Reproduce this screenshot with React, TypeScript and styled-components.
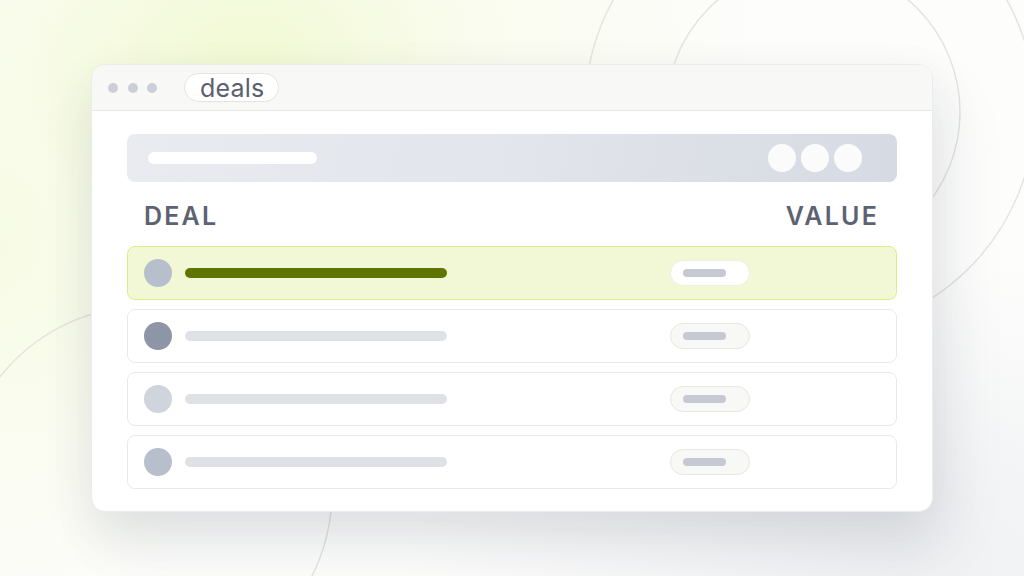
import styled, { createGlobalStyle } from "styled-components";

const GlobalStyle = createGlobalStyle`
  html, body {
    margin: 0;
    padding: 0;
  }
  body {
    font-family: Inter, "Liberation Sans", sans-serif;
  }
`;

const Page = styled.div`
  position: relative;
  width: 1024px;
  height: 576px;
  overflow: hidden;
  box-sizing: border-box;
  padding: 64px 91px;
  background:
    radial-gradient(ellipse 520px 420px at 250px 60px, rgba(240, 249, 205, 0.85) 0%, rgba(246, 251, 226, 0.5) 45%, rgba(255, 255, 255, 0) 100%),
    radial-gradient(ellipse 260px 420px at 0px 250px, rgba(246, 251, 226, 0.8) 0%, rgba(255, 255, 255, 0) 100%),
    radial-gradient(ellipse 500px 300px at 900px 560px, rgba(232, 234, 238, 0.7) 0%, rgba(255, 255, 255, 0) 100%),
    #fdfdfc;
`;

const Rings = styled.svg`
  position: absolute;
  inset: 0;
  width: 1024px;
  height: 576px;
  z-index: 0;
`;

const Window = styled.div`
  position: relative;
  z-index: 1;
  width: 842px;
  height: 448px;
  box-sizing: border-box;
  background: #ffffff;
  border: 1px solid #ececea;
  border-radius: 14px;
  overflow: hidden;
  box-shadow: 0 22px 50px rgba(40, 48, 64, 0.1), 16px 30px 70px rgba(40, 48, 64, 0.06);
  display: flex;
  flex-direction: column;
`;

const TitleBar = styled.div`
  height: 46px;
  box-sizing: border-box;
  background: #f8f8f6;
  border-bottom: 1px solid #e6e6e2;
  display: flex;
  align-items: center;
  padding-left: 16px;
`;

const Dots = styled.div`
  display: flex;
  gap: 9.5px;
  margin-right: 27px;
`;

const Dot = styled.span`
  width: 10px;
  height: 10px;
  border-radius: 50%;
  background: #cdcfd8;
`;

const Tab = styled.div`
  height: 29px;
  box-sizing: border-box;
  padding: 0 14px 0 15px;
  border: 1px solid #e3e3de;
  border-radius: 15px;
  background: #ffffff;
  display: flex;
  align-items: center;
  font-size: 25px;
  color: #5a6070;
  letter-spacing: 0.2px;
`;

const Body = styled.div`
  flex: 1;
  padding: 23px 35px 0 35px;
  display: flex;
  flex-direction: column;
`;

const SearchBar = styled.div`
  height: 48px;
  border-radius: 8px;
  background: linear-gradient(100deg, #e9ebf1 0%, #e2e5eb 50%, #d6dae2 100%);
  display: flex;
  align-items: center;
  justify-content: space-between;
  padding: 0 35px 0 21px;
`;

const SearchField = styled.div`
  width: 169px;
  height: 12px;
  border-radius: 6px;
  background: #ffffff;
`;

const Buttons = styled.div`
  display: flex;
  gap: 5px;
`;

const RoundButton = styled.span`
  width: 28px;
  height: 28px;
  border-radius: 50%;
  background: #fbfbfb;
`;

const Headings = styled.div`
  height: 64px;
  box-sizing: border-box;
  padding: 4px 18px 0 17px;
  display: flex;
  align-items: center;
  justify-content: space-between;
  font-size: 25px;
  font-weight: 600;
  letter-spacing: 2.2px;
  color: #5c6272;
`;

const Rows = styled.div`
  display: flex;
  flex-direction: column;
  gap: 9px;
`;

const Row = styled.div<{ $active?: boolean }>`
  height: 54px;
  box-sizing: border-box;
  border-radius: 8px;
  border: 1px solid ${(p) => (p.$active ? "#d9ee88" : "#e9e9e7")};
  background: ${(p) => (p.$active ? "#f2f8d6" : "#ffffff")};
  display: flex;
  align-items: center;
  padding-left: 16px;
`;

const Avatar = styled.span<{ $tone: string }>`
  width: 28px;
  height: 28px;
  border-radius: 50%;
  background: ${(p) => p.$tone};
  flex-shrink: 0;
`;

const NameBar = styled.span<{ $active?: boolean }>`
  width: 262px;
  height: 10px;
  margin-left: 13px;
  border-radius: 5px;
  background: ${(p) => (p.$active ? "#607500" : "#e0e1e6")};
`;

const ValuePill = styled.span<{ $active?: boolean }>`
  width: 80px;
  height: 26px;
  box-sizing: border-box;
  margin-left: 223px;
  border-radius: 13px;
  border: 1px solid ${(p) => (p.$active ? "#eef2dc" : "#e6e6e3")};
  background: ${(p) => (p.$active ? "#ffffff" : "#f8f8f6")};
  display: flex;
  align-items: center;
  padding-left: 12px;
`;

const ValueBar = styled.span`
  width: 43px;
  height: 8px;
  border-radius: 4px;
  background: #c6c8d2;
`;

const deals = [
  { tone: "#b8bfcc", active: true },
  { tone: "#8d95a7", active: false },
  { tone: "#d0d4dc", active: false },
  { tone: "#b7bfcd", active: false },
];

export default function App() {
  return (
    <>
      <GlobalStyle />
      <Page>
        <Rings viewBox="0 0 1024 576">
          <g fill="none" stroke="#e3e3df" strokeWidth="1.4">
            <circle cx="810" cy="109" r="225" />
            <circle cx="813" cy="112" r="147" />
            <circle cx="146" cy="492" r="186" />
          </g>
        </Rings>
        <Window>
          <TitleBar>
            <Dots>
              <Dot />
              <Dot />
              <Dot />
            </Dots>
            <Tab>deals</Tab>
          </TitleBar>
          <Body>
            <SearchBar>
              <SearchField />
              <Buttons>
                <RoundButton />
                <RoundButton />
                <RoundButton />
              </Buttons>
            </SearchBar>
            <Headings>
              <span>DEAL</span>
              <span>VALUE</span>
            </Headings>
            <Rows>
              {deals.map((d, i) => (
                <Row key={i} $active={d.active}>
                  <Avatar $tone={d.tone} />
                  <NameBar $active={d.active} />
                  <ValuePill $active={d.active}>
                    <ValueBar />
                  </ValuePill>
                </Row>
              ))}
            </Rows>
          </Body>
        </Window>
      </Page>
    </>
  );
}
